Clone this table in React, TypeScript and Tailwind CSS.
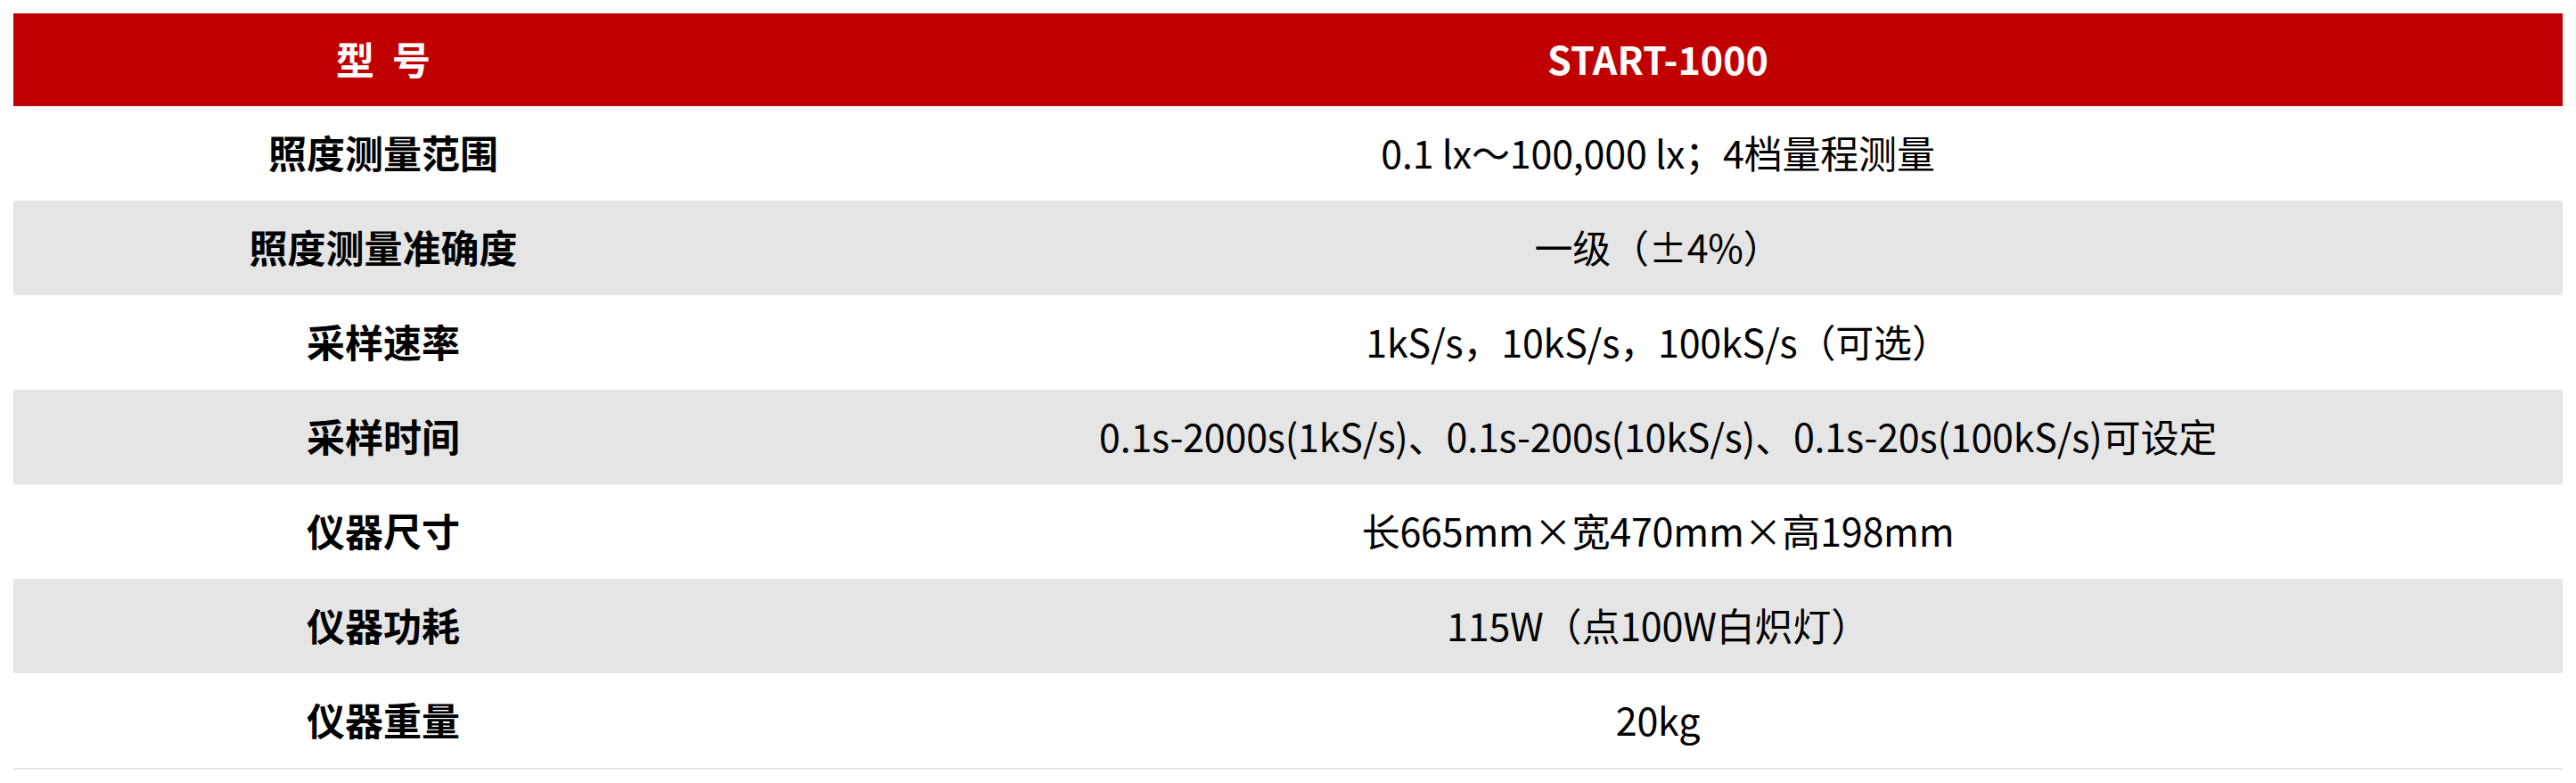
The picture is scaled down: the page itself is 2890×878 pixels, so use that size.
import React from "react";

const rows: [string, string][] = [
  ["照度测量范围", "0.1 lx～100,000 lx；4档量程测量"],
  ["照度测量准确度", "一级（±4%）"],
  ["采样速率", "1kS/s，10kS/s，100kS/s（可选）"],
  ["采样时间", "0.1s-2000s(1kS/s)、0.1s-200s(10kS/s)、0.1s-20s(100kS/s)可设定"],
  ["仪器尺寸", "长665mm×宽470mm×高198mm"],
  ["仪器功耗", "115W（点100W白炽灯）"],
  ["仪器重量", "20kg"],
];

export default function App() {
  return (
    <div className="min-h-[878px] bg-white pt-[15px] pl-[15px] pr-[15px]" style={{ fontFamily: '"Noto Sans CJK SC", "Noto Sans", sans-serif' }}>
      <div className="w-[2860px] border-b-2 border-[#e5e5e5]">
        <div className="grid grid-cols-[830px_1fr] h-[104px] bg-[#c00000] text-white font-bold text-[43px] leading-none">
          <div className="flex items-center justify-center pb-[4px]">
            <span>型</span>
            <span className="ml-[20px]">号</span>
          </div>
          <div className="flex items-center justify-center pb-[4px]">START-1000</div>
        </div>
        {rows.map(([k, v], i) => (
          <div
            key={k}
            className={
              i % 2 === 1
                ? "grid grid-cols-[830px_1fr] h-[106px] bg-[#e5e5e5] text-black text-[43px] leading-none"
                : "grid grid-cols-[830px_1fr] h-[106px] bg-white text-black text-[43px] leading-none"
            }
          >
            <div className="flex items-center justify-center font-bold pb-[4px]">{k}</div>
            <div className="flex items-center justify-center pb-[4px] tracking-[-0.2px]">{v}</div>
          </div>
        ))}
      </div>
    </div>
  );
}
